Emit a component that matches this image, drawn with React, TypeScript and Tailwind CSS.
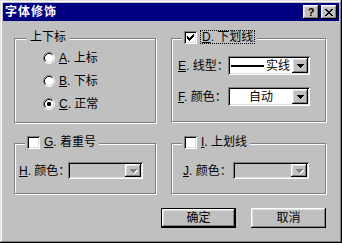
import React from "react";

// Win98-ish bevels
const windowBevel =
  "shadow-[inset_-1px_-1px_#000,inset_1px_1px_#dfdfdf,inset_-2px_-2px_#808080,inset_2px_2px_#fff]";
const raised =
  "shadow-[inset_-1px_-1px_#000,inset_1px_1px_#fff,inset_-2px_-2px_#808080,inset_2px_2px_#dfdfdf]";
const sunken =
  "shadow-[inset_1px_1px_#808080,inset_-1px_-1px_#fff,inset_2px_2px_#000,inset_-2px_-2px_#dfdfdf]";
const etched = "border border-[#808080] shadow-[inset_1px_1px_#fff,1px_1px_#fff]";

function Pixels({ w, h, px, color }: { w: number; h: number; px: number[][]; color: string }) {
  return (
    <svg width={w} height={h} viewBox={`0 0 ${w} ${h}`} shapeRendering="crispEdges">
      {px.map(([x, y, pw], i) => (
        <rect key={i} x={x} y={y} width={pw} height={1} fill={color} />
      ))}
    </svg>
  );
}

const arrowPx = [
  [0, 0, 7],
  [1, 1, 5],
  [2, 2, 3],
  [3, 3, 1],
];

const checkPx = [
  [6, 0, 1],
  [5, 1, 2],
  [0, 2, 1],
  [4, 2, 3],
  [0, 3, 2],
  [3, 3, 3],
  [0, 4, 5],
  [1, 5, 3],
  [2, 6, 1],
];

const closePx = [
  [0, 0, 2],
  [6, 0, 2],
  [1, 1, 2],
  [5, 1, 2],
  [2, 2, 4],
  [3, 3, 2],
  [2, 4, 4],
  [1, 5, 2],
  [5, 5, 2],
  [0, 6, 2],
  [6, 6, 2],
];

function Radio({ checked }: { checked?: boolean }) {
  return (
    <svg width="12" height="12" viewBox="0 0 12 12" className="shrink-0">
      <circle cx="6" cy="6" r="4.5" fill="#fff" />
      <path d="M2.11 9.89A5.5 5.5 0 0 1 9.89 2.11" fill="none" stroke="#808080" />
      <path d="M9.89 2.11A5.5 5.5 0 0 1 2.11 9.89" fill="none" stroke="#fff" />
      <path d="M2.82 9.18A4.5 4.5 0 0 1 9.18 2.82" fill="none" stroke="#000" />
      <path d="M9.18 2.82A4.5 4.5 0 0 1 2.82 9.18" fill="none" stroke="#dfdfdf" />
      {checked && <rect x="4" y="4" width="4" height="4" rx="1.2" fill="#000" />}
    </svg>
  );
}

function Checkbox({ checked }: { checked?: boolean }) {
  return (
    <div className={`flex h-[13px] w-[13px] shrink-0 items-center justify-center bg-white ${sunken}`}>
      {checked && <Pixels w={7} h={7} px={checkPx} color="#000" />}
    </div>
  );
}

function Key({ k }: { k: string }) {
  return (
    <>
      <span className="underline decoration-1 underline-offset-[1px]">{k}</span>.
    </>
  );
}

function Combo({
  width,
  height,
  disabled,
  children,
}: {
  width: string;
  height: string;
  disabled?: boolean;
  children?: React.ReactNode;
}) {
  return (
    <div
      className={`flex shrink-0 items-stretch p-[2px] ${width} ${height} ${sunken} ${
        disabled ? "bg-[#c0c0c0]" : "bg-white"
      }`}
    >
      <div className="flex min-w-0 flex-1 items-center whitespace-nowrap">{children}</div>
      <div className={`flex w-[16px] items-center justify-center bg-[#c0c0c0] ${raised}`}>
        {disabled ? (
          <div className="relative">
            <div className="absolute left-[1px] top-[1px]">
              <Pixels w={7} h={4} px={arrowPx} color="#fff" />
            </div>
            <div className="relative">
              <Pixels w={7} h={4} px={arrowPx} color="#808080" />
            </div>
          </div>
        ) : (
          <Pixels w={7} h={4} px={arrowPx} color="#000" />
        )}
      </div>
    </div>
  );
}

export default function App() {
  return (
    <div
      className={`flex h-[243px] w-[342px] flex-col bg-[#c0c0c0] p-[3px] text-[12px] leading-[14px] text-black font-["Liberation_Sans","Noto_Sans_CJK_SC",sans-serif] ${windowBevel}`}
    >
      {/* Title bar */}
      <div className="flex h-[18px] shrink-0 items-center bg-[#000080] pl-[2px] pr-[2px]">
        <span className="flex-1 text-[12px] font-bold tracking-[1px] text-white">字体修饰</span>
        <div className="flex gap-[2px]">
          <div
            className={`flex h-[14px] w-[16px] items-center justify-center bg-[#c0c0c0] text-[11px] font-bold leading-none ${raised}`}
          >
            ?
          </div>
          <div className={`flex h-[14px] w-[16px] items-center justify-center bg-[#c0c0c0] ${raised}`}>
            <Pixels w={8} h={7} px={closePx} color="#000" />
          </div>
        </div>
      </div>

      <div className="flex flex-col px-[11px] pt-[17px]">
        {/* top groups */}
        <div className="flex items-start gap-[15px]">
          <div className={`relative flex h-[85px] w-[142px] flex-col gap-[7px] pl-[28px] pt-[11px] ${etched}`}>
            <span className="absolute left-[11px] top-[-9px] bg-[#c0c0c0] px-[4px]">上下标</span>
            <div className="flex h-[16px] items-center gap-[4px] whitespace-nowrap">
              <Radio />
              <span>
                <Key k="A" /> 上标
              </span>
            </div>
            <div className="flex h-[16px] items-center gap-[4px] whitespace-nowrap">
              <Radio />
              <span>
                <Key k="B" /> 下标
              </span>
            </div>
            <div className="flex h-[16px] items-center gap-[4px] whitespace-nowrap">
              <Radio checked />
              <span>
                <Key k="C" /> 正常
              </span>
            </div>
          </div>

          <div className={`relative flex h-[84px] w-[155px] flex-col gap-[12px] pl-[6px] pt-[17px] ${etched}`}>
            <div className="absolute left-[10px] top-[-9px] flex items-center gap-[3px] whitespace-nowrap bg-[#c0c0c0] px-[2px]">
              <Checkbox checked />
              <span className="border border-dotted border-black px-[1px] leading-[12px]">
                <Key k="D" /> 下划线
              </span>
            </div>
            <div className="flex h-[19px] items-center whitespace-nowrap">
              <span className="w-[50px] shrink-0">
                <Key k="E" /> 线型：
              </span>
              <Combo width="w-[82px]" height="h-[19px]">
                <div className="ml-[1px] h-[2px] w-[33px] bg-black" />
                <span className="ml-[2px]">实线</span>
              </Combo>
            </div>
            <div className="flex h-[19px] items-center whitespace-nowrap">
              <span className="w-[50px] shrink-0">
                <Key k="F" /> 颜色：
              </span>
              <Combo width="w-[82px]" height="h-[19px]">
                <span className="flex-1 text-center">自动</span>
              </Combo>
            </div>
          </div>
        </div>

        {/* bottom groups */}
        <div className="mt-[20px] flex items-start gap-[15px]">
          <div className={`relative flex h-[51px] w-[142px] pl-[4px] pt-[18px] ${etched}`}>
            <div className="absolute left-[10px] top-[-9px] flex items-center gap-[3px] whitespace-nowrap bg-[#c0c0c0] px-[2px]">
              <Checkbox />
              <span className="px-[1px]">
                <Key k="G" /> 着重号
              </span>
            </div>
            <div className="flex h-[17px] items-center whitespace-nowrap">
              <span className="w-[49px] shrink-0">
                <Key k="H" /> 颜色：
              </span>
              <Combo width="w-[75px]" height="h-[17px]" disabled />
            </div>
          </div>

          <div className={`relative flex h-[51px] w-[155px] pl-[11px] pt-[18px] ${etched}`}>
            <div className="absolute left-[10px] top-[-9px] flex items-center gap-[3px] whitespace-nowrap bg-[#c0c0c0] px-[2px]">
              <Checkbox />
              <span className="px-[1px]">
                <Key k="I" /> 上划线
              </span>
            </div>
            <div className="flex h-[17px] items-center whitespace-nowrap">
              <span className="w-[50px] shrink-0">
                <Key k="J" /> 颜色：
              </span>
              <Combo width="w-[76px]" height="h-[17px]" disabled />
            </div>
          </div>
        </div>

        {/* buttons */}
        <div className="mt-[14px] flex justify-end gap-[15px] pr-[2px]">
          <div className="h-[20px] w-[75px] border border-black">
            <div className={`flex h-full w-full items-center justify-center bg-[#c0c0c0] ${raised}`}>确定</div>
          </div>
          <div className={`flex h-[20px] w-[75px] items-center justify-center bg-[#c0c0c0] ${raised}`}>取消</div>
        </div>
      </div>
    </div>
  );
}
